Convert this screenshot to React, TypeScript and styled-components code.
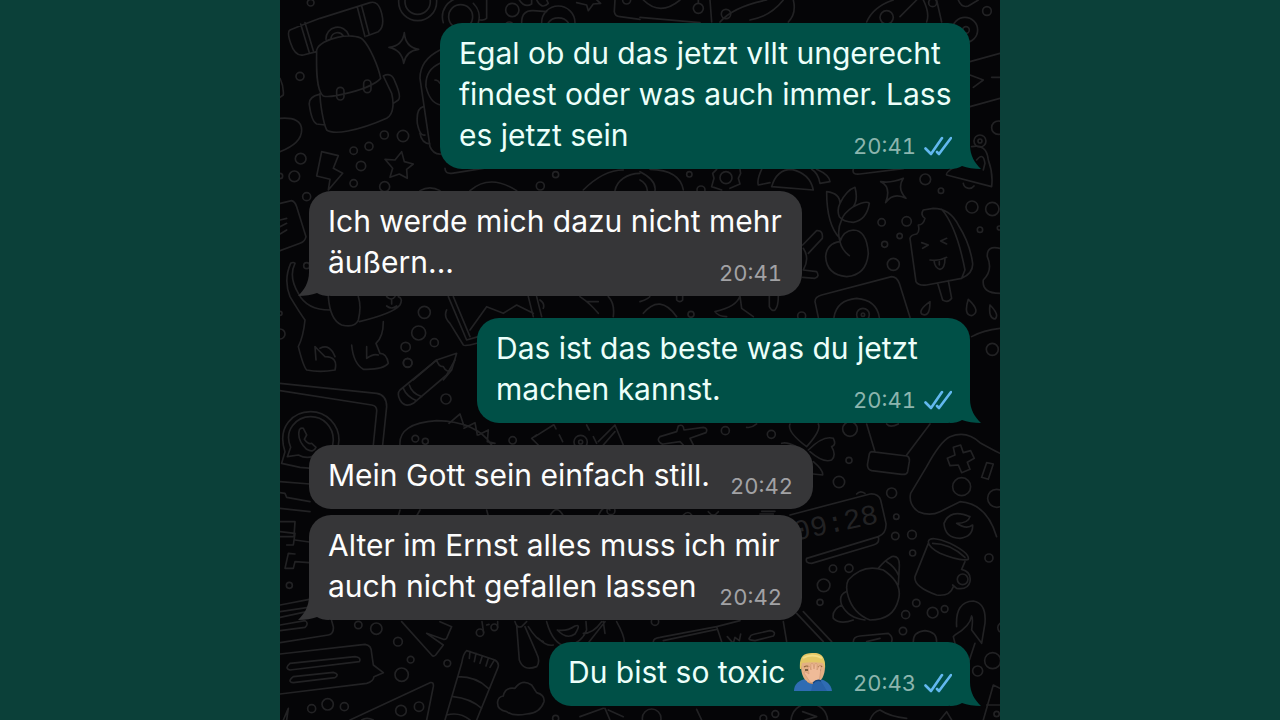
import React from "react";
import styled, { createGlobalStyle, css } from "styled-components";

const GlobalStyle = createGlobalStyle`
  * { box-sizing: border-box; }
  body {
    margin: 0;
    background: #0b4039;
    font-family: Inter, "Noto Sans", sans-serif;
  }
`;

const Page = styled.main`
  min-height: 100vh;
  display: flex;
  justify-content: center;
`;

const Chat = styled.section`
  position: relative;
  isolation: isolate;
  width: 100%;
  max-width: 720px;
  min-height: 100vh;
  padding: 23px 30px 12px 29px;
  background: #050507;
  overflow: hidden;
`;

const Wallpaper = styled.svg`
  position: absolute;
  inset: 0;
  z-index: -1;
  width: 100%;
  height: 100%;
  fill: none;
  stroke: #222224;
  stroke-width: 5;
  stroke-linecap: round;
  stroke-linejoin: round;
`;

const ClockDigits = styled.text`
  font: 400 86px "Liberation Mono", monospace;
  fill: #222224;
  stroke: none;
`;

const MessageList = styled.ol`
  display: flex;
  flex-direction: column;
  gap: 22px;
  margin: 0;
  padding: 0;
  list-style: none;
`;

const Group = styled.li<{ $own: boolean }>`
  display: flex;
  flex-direction: column;
  gap: 6px;
  align-items: ${(p) => (p.$own ? "flex-end" : "flex-start")};
`;

const Bubble = styled.article<{ $own: boolean; $width: number }>`
  position: relative;
  display: grid;
  width: ${(p) => p.$width}px;
  max-width: 100%;
  padding: 10px 18px 13px 19px;
  border-radius: 22px;
  ${(p) =>
    p.$own
      ? css`
          background: #005047;
          color: #ecfffa;
        `
      : css`
          background: #363638;
          color: #fdfdfd;
        `}
`;

const Tail = styled.svg<{ $own: boolean }>`
  position: absolute;
  bottom: 0;
  width: 31px;
  height: 24px;
  fill: ${(p) => (p.$own ? "#005047" : "#363638")};
  ${(p) =>
    p.$own
      ? "right: -11px;"
      : "left: -11px; transform: scaleX(-1);"}
`;

const Body = styled.p`
  grid-area: 1 / 1;
  margin: 0;
  font-size: 30px;
  line-height: 41px;
  white-space: nowrap;
`;

const Meta = styled.footer<{ $own: boolean }>`
  grid-area: 1 / 1;
  place-self: end;
  display: flex;
  align-items: center;
  gap: 8px;
  height: 20px;
  margin-right: ${(p) => (p.$own ? 0 : 2)}px;
  font-size: 22px;
  font-variant-numeric: tabular-nums;
  line-height: 20px;
  color: ${(p) => (p.$own ? "#8cb5ae" : "#a2a2a5")};
`;

const TickIcon = styled.svg`
  width: 28px;
  height: 20px;
  fill: none;
  stroke: #62b8ef;
  stroke-width: 2.6;
  stroke-linecap: round;
  stroke-linejoin: round;
`;

const EmojiIcon = styled.svg`
  width: 38px;
  height: 38px;
  margin-left: 9px;
  vertical-align: -8px;
`;

type Doodle = { x: number; y: number; lines: string; dots: number[][] };

/* Each patch of the wallpaper is drawn at three times its size. */
const doodles: Doodle[] = [
  {
    x: 0,
    y: 0,
    lines: `M60 90Q110 70 150 55L300 8Q325 0 335 40Q345 80 325 95L290 108M140 155L100 165Q75 170 62 130Q50 95 60 90
      M92 72L118 158M105 68L130 152M262 22L285 110M275 18L298 105
      M168 118A35 35 0 0 1 236 105M183 114A20 20 0 0 1 220 108
      M140 150C150 115 250 95 278 118C300 140 325 200 332 235C300 270 180 295 160 288C135 270 140 180 140 150Z
      M150 280C150 310 160 370 170 390C190 405 260 395 350 355C375 340 370 300 365 280L340 228
      M148 283Q115 290 118 315Q125 365 140 372L165 375M340 228Q365 215 375 245Q395 290 385 300L370 310
      M200 273a11 11 0 0 1 22 0v16a11 11 0 0 1-22 0ZM281 251a11 11 0 0 1 22 0v16a11 11 0 0 1-22 0Z
      M403 98Q406 142 446 148Q408 152 401 190Q396 150 357 142Q398 138 403 98Z
      M155 455L205 467L190 505L218 520L175 570L180 538L140 528Z
      M395 455L403 485L430 492L410 508L412 535L388 522L360 532L368 505L345 478L375 480Z
      M520 68A57 57 0 0 1 570 -6M625 68A57 57 0 0 0 610 10M650 0V55Q645 62 630 60
      M755 68Q755 30 790 32L830 35M815 68A50 50 0 0 1 915 68M835 68A35 30 0 0 1 895 68
      M748 0Q765 25 785 12L785 0M800 0Q815 30 835 10L830 0
      M920 8L950 15L955 32L970 12L992 10L975 -5M1035 0L1033 35Q1035 50 1050 50L1110 58
      M30 355Q95 350 95 390Q95 430 30 455M30 235Q42 260 40 285L30 292
      M510 150Q450 180 450 235L480 440Q490 465 515 462M510 190Q465 210 468 260Q480 310 512 315
      M460 320Q438 325 442 370Q450 410 465 405M450 400Q455 430 480 432M495 240Q505 240 510 250
      M525 505Q525 522 545 520L640 505M600 572Q660 520 740 572M940 570Q1000 510 1060 510
      M1035 572A75 60 0 0 1 1110 520M450 572Q480 555 510 572`,
    dots: [
      [90, 229, 12], [343, 405, 12], [399, 408, 17], [251, 452, 11], [297, 439, 12], [273, 498, 14],
      [92, 476, 16], [73, 529, 16], [251, 550, 11], [344, 560, 15], [110, 590, 12], [122, 8, 10],
      [30, 528, 8], [443, 5, 57], [443, 5, 38], [572, 50, 36], [727, 30, 20], [718, 78, 12],
      [1070, 0, 12], [857, 524, 9], [811, 558, 12],
    ],
  },
  {
    x: 370,
    y: 0,
    lines: `M10 0Q60 50 120 0M175 10V0M210 0L215 66M240 66Q280 20 380 0M330 60Q390 50 430 0M460 0Q470 40 445 66M0 52L180 68
      M680 66Q700 20 760 0M780 50Q810 20 830 0M850 0Q870 40 860 66M890 0L905 66M955 0Q965 25 985 18L1015 0
      M990 185L1080 160M990 225L1030 240L1000 262M1055 232H1080M990 320L1080 295
      M995 440Q1040 430 1045 480Q1060 520 1055 560L920 525Q915 515 965 490M970 550A18 18 0 0 0 1002 558
      M1010 480Q1030 455 1035 490L1030 510
      M230 508L218 520L222 535L215 560L245 570M300 508L302 520L295 535L300 552L270 565
      M365 508Q350 540 355 555L390 548M395 560Q410 508 455 508Q510 520 520 570L395 560
      M530 508Q568 525 570 545L540 550Q535 520 515 508M640 508Q635 525 660 522L790 506
      M790 535Q755 550 722 545Q755 560 737 608Q760 575 798 595Q770 565 790 535Z
      M0 515Q50 540 45 572M0 540Q20 550 22 572M30 508Q120 510 130 570`,
    dots: [
      [175, 25, 15], [258, 42, 14], [740, 52, 20], [878, 8, 12], [1041, 33, 13], [975, 90, 38],
      [978, 90, 10], [1075, 383, 20], [1020, 423, 18], [1020, 423, 6], [148, 523, 8],
      [258, 533, 18], [856, 538, 16], [903, 572, 8], [183, 570, 12],
    ],
  },
  {
    x: 0,
    y: 180,
    lines: `M30 70L65 62Q75 65 80 80L108 170Q105 185 90 190L30 212M30 120L50 115M30 140L50 130M30 162L50 150
      M62 250Q40 300 60 350Q90 400 105 420Q100 470 85 500Q100 560 110 570Q150 578 195 570Q205 530 165 530L145 510L135 500L138 540
      M75 250Q55 290 85 340Q110 390 180 390M62 250Q70 245 75 250
      M175 350Q180 420 215 435Q255 445 265 420Q275 380 265 350M268 425Q370 400 390 375Q400 355 385 350
      M350 350Q365 365 375 350M365 360V372M350 378Q365 390 380 378
      M245 495Q250 550 280 568Q340 570 355 550Q350 520 330 520L318 490Q340 470 340 425M290 500V535Q310 520 325 525
      M150 505Q180 490 195 530M535 350L590 480L625 470M550 350L600 470M530 390Q520 410 540 430L580 495Q585 500 620 490
      M600 450L650 380L700 400L740 375L790 400M775 350L790 410M800 350L815 410M810 360Q825 370 820 385
      M930 350Q960 370 985 400M1015 350Q1035 370 1030 410M950 365H985
      M430 600L500 540L560 520L545 570L520 600M500 540Q505 560 520 560Q530 580 545 570`,
    dots: [
      [463, 397, 18], [446, 459, 21], [407, 501, 14], [493, 488, 12], [413, 549, 13], [110, 257, 9],
      [30, 462, 15], [30, 400, 6],
    ],
  },
  {
    x: 370,
    y: 160,
    lines: `M600 235Q560 195 560 95Q600 100 600 130Q620 90 645 82Q655 120 640 140Q680 120 688 130Q680 180 640 187Q610 185 598 170Q590 150 600 130
      M640 140Q610 160 605 180Q590 210 600 245Q605 270 628 287
      M600 245Q560 250 557 290Q560 345 620 350Q680 345 685 280Q680 210 640 210Q610 212 600 245
      M850 150Q840 165 855 175Q850 195 835 195Q840 215 830 222Q812 225 810 235L828 365Q835 378 860 375L965 355Q1000 340 998 310Q990 250 955 195Q930 145 880 145Z
      M905 148Q950 200 975 330L965 355M893 370L908 420Q925 430 935 415L925 362
      M845 248L865 255L848 265M920 235L902 243L920 252M870 300Q895 305 920 292M882 302Q885 325 900 328Q915 325 915 296M898 305V315
      M1080 265Q1040 255 1042 290Q1060 330 1030 360Q1025 400 1080 400
      M870 425Q835 450 845 462Q870 475 870 425ZM985 418Q970 465 995 467Q1025 455 985 418ZM1050 435Q1045 475 1065 477Q1080 465 1050 435Z
      M535 472L525 425Q525 410 545 405L755 350Q770 350 778 370L810 472M582 472Q590 420 650 415Q710 420 718 472
      M488 255L530 212Q550 210 547 235L505 280M490 265Q510 295 490 330L530 335Q540 350 525 355L488 352
      M388 408V440Q395 455 405 450Q415 440 415 408M300 408Q290 440 225 455Q235 470 260 470M300 408L305 445L340 470
      M0 425Q30 415 30 408M10 460Q60 400 110 470M110 408V420Q120 430 128 420V408M995 530Q1030 510 1080 505`,
    dots: [
      [725, 187, 11], [800, 184, 14], [779, 228, 8], [734, 253, 9], [760, 313, 18], [996, 141, 18],
      [1057, 147, 20], [1020, 209, 8], [1078, 204, 6], [153, 463, 9], [485, 468, 12],
      [669, 464, 19], [669, 464, 5], [1057, 568, 18],
    ],
  },
  {
    x: 0,
    y: 360,
    lines: `M500 0L390 90Q380 100 390 120Q405 145 430 130L530 45L555 0M400 85Q410 110 440 122M418 75Q425 100 455 110
      M30 70L320 100Q350 105 350 140L338 255M30 92L305 135Q322 138 320 155L310 255
      M35 310L45 275C20 200 70 155 122 155C170 155 207 195 207 240L205 255M52 290L62 262C40 210 80 170 122 170C160 170 190 200 190 240L188 255
      M52 290L85 285Q110 298 130 288M35 310L90 322L125 325
      M88 210Q80 240 110 268Q130 280 138 262L125 250Q115 255 103 238L110 225L100 205Q92 202 88 210
      M30 365L120 372M30 398L45 400L50 412L120 425M30 445L120 455M30 485H75L72 530H30
      M390 255Q385 190 500 182Q620 185 665 255M537 190L570 162L582 198M582 205L615 188L622 225M625 225L655 210L652 245L675 250
      M800 225L785 235L805 255M795 230L850 195M852 195L858 207M868 225L878 245M950 195L958 210M970 230L980 250
      M985 245L1035 195L1060 255M1000 255L1035 215M440 468L450 450M650 450L655 468M840 468Q860 430 880 468M385 468L390 450
      M985 468Q1000 430 1020 450`,
    dots: [
      [528, 117, 15], [413, 8, 13], [436, 236, 10], [466, 244, 9], [728, 241, 11], [932, 246, 20],
      [932, 246, 6], [1023, 452, 12],
    ],
  },
  {
    x: 370,
    y: 350,
    lines: `M60 260L110 245L115 228Q130 220 132 240L190 232Q205 235 198 248L150 265L160 285M60 260Q50 270 60 278Q65 283 70 282L120 275L130 285
      M500 290Q440 245 450 222M500 290Q545 240 535 222M505 300Q550 255 580 265Q590 285 575 290Q590 315 575 330Q550 340 510 305
      M470 290Q440 275 425 280M520 335Q550 360 548 375L520 372M320 232Q335 235 350 222
      M680 222L705 305M870 222L800 315M740 222Q750 235 775 222
      M695 305L800 318Q810 320 808 335L803 365Q800 375 785 373L695 362Q680 358 683 340L688 312Q690 305 695 305
      M1080 310Q1060 300 1020 278Q980 240 930 260Q900 275 860 350L812 430Q805 465 835 485Q870 500 900 485L960 455Q1040 460 1070 560
      M940 292L962 285L970 308L992 302L1003 325L982 337L990 358L965 368L955 345L930 347L922 325L945 315ZM1040 338L1060 342L1045 388L1025 382Z
      M450 495L690 432Q715 430 722 450L738 520Q740 550 715 560M650 432Q660 420 675 430
      M990 500Q930 475 912 520Q915 565 960 565Q1000 560 998 525Q980 540 950 520Q985 520 990 500
      M365 484H405M360 492H400M130 495Q145 480 155 495M205 485Q220 505 235 485`,
    dots: [
      [256, 242, 12], [394, 253, 12], [630, 237, 22], [627, 331, 9], [597, 396, 17], [755, 429, 15],
      [769, 500, 8], [766, 558, 11], [816, 554, 13], [965, 410, 27], [1070, 445, 27],
    ],
  },
  {
    x: 0,
    y: 530,
    lines: `M30 5L75 10L70 45L50 45M75 30L118 36M70 115H45L55 70L75 72M70 115L75 95L118 98
      M30 225L118 208M30 245L115 232M30 262L110 245M30 285L105 272Q118 280 105 292L30 302M30 338L175 315Q192 312 190 290L185 272
      M30 372L285 343Q305 345 305 370L310 405L340 428L312 440Q310 455 290 460L30 492
      M60 400L255 380Q275 382 268 395L60 420Q42 415 60 400M70 440L190 427Q210 432 195 443L70 458Q50 455 70 440
      M395 275L485 375Q490 382 497 375L520 345L470 310L520 328Q530 330 532 320L545 290L510 275
      M641 308L636 275M683 292V275M650 285L657 283
      M735 275Q740 295 755 290L770 275M740 285L748 390Q760 425 800 410Q812 395 800 370L765 290M775 290Q800 330 820 335
      M830 275Q850 345 890 348Q935 340 950 300L948 275M862 300Q890 305 915 288Q935 280 915 312Q890 330 862 300M850 345Q830 350 805 325
      M1005 275L950 345M1000 275L1005 310M940 310Q970 310 995 275M1040 275Q1065 320 1063 340
      M590 362L675 390Q690 400 683 415L620 570M590 362Q580 370 575 400L525 570M565 440Q620 440 655 475M550 500Q600 505 635 535M530 555Q570 545 600 570
      M600 365L598 385M618 370L613 395M637 378L630 400M655 385L648 408M672 392L660 412
      M710 545Q680 540 683 515Q685 500 700 498Q705 470 735 475Q755 445 785 465Q795 480 800 488Q825 495 822 515Q810 550 770 552Q730 560 710 545Z
      M240 570L480 458Q492 455 490 470L470 570M40 570L55 535L50 570M275 570Q290 560 310 570M930 560L1000 535M1005 535L1020 570M1015 540L1060 560`,
    dots: [
      [58, 166, 9], [265, 285, 11], [319, 296, 17], [384, 335, 13], [422, 389, 10], [395, 434, 20],
      [532, 400, 10], [125, 536, 12], [173, 523, 17], [223, 530, 12], [393, 542, 16],
      [447, 530, 14], [630, 308, 11], [673, 292, 10], [857, 565, 9],
    ],
  },
  {
    x: 370,
    y: 530,
    lines: `M500 85Q495 100 515 100L700 45Q720 40 715 20L500 85
      M625 150Q670 100 730 120Q790 160 775 210Q760 270 690 270Q640 250 625 200Q615 170 625 150
      M715 115Q735 90 755 80Q780 75 778 110L775 165M740 95Q765 110 775 135M618 185Q595 195 605 225Q625 265 675 270M605 225Q575 240 580 265Q600 285 640 270
      M865 35Q870 15 930 40Q990 70 985 88Q960 95 900 70Q865 50 865 35ZM878 40Q930 40 975 82M865 40L825 140Q820 170 890 195Q930 200 940 170M975 95L965 118Q995 125 990 155Q985 180 950 175L938 165
      M950 290Q945 215 1000 213Q1040 220 1035 280L1025 340L995 300Q1000 265 995 258Q990 290 945 315L940 320L945 340M985 400L1005 340
      M1080 280Q1068 290 1078 305M640 335Q640 320 660 318L745 310Q760 320 755 335M680 335L720 325M820 335Q820 305 855 302Q890 305 890 335
      M40 335Q40 325 60 322L230 290L300 272M70 332L230 298M230 290L245 335M330 322Q320 330 345 332L400 318Q410 305 390 302L345 312Q330 315 330 322
      M430 275L440 335M470 250L550 335M490 245L575 335M262 320L280 340L285 322L298 332L302 312
      M1030 570L1060 465L1080 475M1040 525H1080M488 545L530 560L495 570M690 570Q700 545 720 540Q750 560 800 565M900 570L920 545L935 570M170 538L185 570`,
    dots: [
      [579, 116, 11], [627, 115, 12], [551, 166, 19], [540, 217, 9], [829, 219, 11], [797, 254, 12],
      [878, 248, 16], [914, 237, 10], [789, 303, 11], [818, 69, 9], [1047, 84, 12], [968, 148, 16],
      [1058, 392, 24], [1013, 423, 15], [406, 552, 10], [370, 565, 10], [45, 275, 11],
      [1070, 552, 8], [35, 565, 28], [508, 575, 55],
    ],
  },
];

function Doodles() {
  return (
    <Wallpaper viewBox="10 0 720 720" preserveAspectRatio="xMidYMin slice" aria-hidden="true">
      {doodles.map((d, i) => (
        <g key={i} transform={`translate(${d.x} ${d.y}) scale(.3333)`}>
          <path d={d.lines} />
          {d.dots.map(([cx, cy, r], n) => (
            <circle key={n} cx={cx} cy={cy} r={r} />
          ))}
        </g>
      ))}
      <g transform="translate(370 350) scale(.3333)">
        <ClockDigits transform="translate(466 572) rotate(-12)">09:28</ClockDigits>
      </g>
    </Wallpaper>
  );
}

function Ticks() {
  return (
    <TickIcon viewBox="0 0 28 20" role="img" aria-label="Gelesen">
      <path d="M1.5 12.500 7 18 18 2M13 16l2 2L27 2" />
    </TickIcon>
  );
}

function FacepalmEmoji() {
  return (
    <EmojiIcon viewBox="0 0 38 38" role="img" aria-label="Facepalm">
      <path d="M0 38c0-7 5-11 12-12l13 0c7 1 12 5 13 12Z" fill="#2f6cb3" />
      <path d="M13 23h11v6q-5 4-11 0Z" fill="#c98f60" />
      <path d="M7 12C7 4 12 2 19 2s12 3 12 11c0 9-3 17-12 17S7 22 7 12Z" fill="#e3b084" />
      <path d="M6 16C5 4 9 0 18 0c9-1 14 4 13 16l-2-6c-6-1-14-1-21 0l-1 6Z" fill="#e3c765" />
      <path d="M9 5q9-5 19 0" fill="none" stroke="#f2dd86" strokeWidth="2" />
      <path d="M10 14q3-2 5 0M24 14q3-2 4 0" fill="none" stroke="#8d6337" strokeWidth="1.200" />
      <path d="M11 17h3M25 17h2" stroke="#5b4028" strokeWidth="1.500" />
      <path
        d="M14 14q1-2 2 0l1 3 0-6q1-2 2 0l1 5 1-5q1-2 2 0l0 6 2-4q2-1 2 1l-1 9c0 4-3 6-5 8l-5-2-6-9q0-2 2-1l3 2Z"
        fill="#efbb98"
        stroke="#cf9470"
        strokeWidth=".600"
      />
      <path d="M19 30q4-4 8-2l6 10H17Z" fill="#2862a8" />
      <path d="M19 30q4-4 8-2" fill="none" stroke="#17457c" strokeWidth="1.500" />
    </EmojiIcon>
  );
}

type Message = {
  lines: string[];
  time: string;
  width: number;
  tail?: boolean;
  emoji?: boolean;
};

const groups: { own: boolean; messages: Message[] }[] = [
  {
    own: true,
    messages: [
      {
        lines: ["Egal ob du das jetzt vllt ungerecht", "findest oder was auch immer. Lass", "es jetzt sein"],
        time: "20:41",
        width: 530,
        tail: true,
      },
    ],
  },
  {
    own: false,
    messages: [
      { lines: ["Ich werde mich dazu nicht mehr", "äußern..."], time: "20:41", width: 493, tail: true },
    ],
  },
  {
    own: true,
    messages: [
      { lines: ["Das ist das beste was du jetzt", "machen kannst."], time: "20:41", width: 493, tail: true },
    ],
  },
  {
    own: false,
    messages: [
      { lines: ["Mein Gott sein einfach still."], time: "20:42", width: 504 },
      {
        lines: ["Alter im Ernst alles muss ich mir", "auch nicht gefallen lassen"],
        time: "20:42",
        width: 493,
        tail: true,
      },
    ],
  },
  {
    own: true,
    messages: [{ lines: ["Du bist so toxic"], time: "20:43", width: 421, tail: true, emoji: true }],
  },
];

export default function App() {
  return (
    <>
      <GlobalStyle />
      <Page>
        <Chat>
          <Doodles />
          <MessageList>
            {groups.map((group, g) => (
              <Group key={g} $own={group.own}>
                {group.messages.map((m, i) => (
                  <Bubble key={i} $own={group.own} $width={m.width}>
                    {m.tail && (
                      <Tail $own={group.own} viewBox="0 0 31 24" aria-hidden="true">
                        <path d="M0 24C5 24 9 23 12 21C17 23 24 24 31 24C25 18 20 11 20 0H0Z" />
                      </Tail>
                    )}
                    <Body>
                      {m.lines.map((line, n) => (
                        <React.Fragment key={n}>
                          {n > 0 && <br />}
                          {line}
                        </React.Fragment>
                      ))}
                      {m.emoji && <FacepalmEmoji />}
                    </Body>
                    <Meta $own={group.own}>
                      <time>{m.time}</time>
                      {group.own && <Ticks />}
                    </Meta>
                  </Bubble>
                ))}
              </Group>
            ))}
          </MessageList>
        </Chat>
      </Page>
    </>
  );
}
